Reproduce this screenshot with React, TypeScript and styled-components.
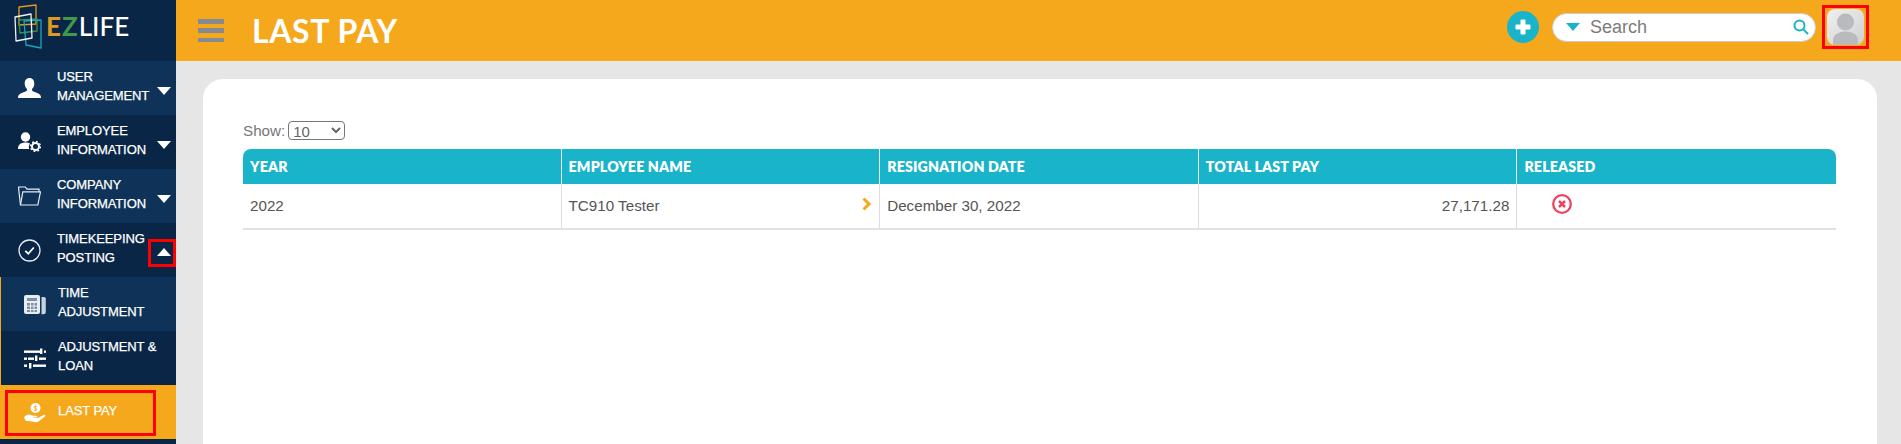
import React from "react";
import styled, { createGlobalStyle } from "styled-components";

const Global = createGlobalStyle`
  html, body { margin: 0; padding: 0; height: 100%; overflow: hidden; background: #e6e6e6; }
  body { font-family: "Liberation Sans", Arial, sans-serif; }
  #root { height: 100%; }
`;

const Shell = styled.div`
  display: grid;
  grid-template-columns: 176px 1fr;
  height: 444px;
  overflow: hidden;
`;

const Sidebar = styled.aside`
  background: #0a2647;
  display: flex;
  flex-direction: column;
`;

const LogoBar = styled.div`
  height: 61px;
  display: flex;
  align-items: flex-start;
  padding: 4px 0 0 14px;
  box-sizing: border-box;
`;

const LogoText = styled.span`
  font-family: "Lato", sans-serif;
  font-size: 26px;
  font-weight: 500;
  letter-spacing: 0;
  line-height: 1;
  color: #fff;
  margin: 9px 0 0 4px;
`;
const LogoLetter = styled.span<{ $c: string }>`
  color: ${(p) => p.$c};
  font-weight: 700;
  margin-right: 1px;
`;

const NavRow = styled.div<{ $alt?: boolean; $sub?: boolean }>`
  position: relative;
  height: 54px;
  box-sizing: border-box;
  display: flex;
  align-items: center;
  background: ${(p) => (p.$alt ? "#0f3358" : "#0a2647")};
  border-left: ${(p) => (p.$sub ? "1px solid #f6a81c" : "0")};
  padding-left: ${(p) => (p.$sub ? "22px" : "18px")};
`;

const NavIcon = styled.span`
  width: 23px;
  height: 24px;
  display: flex;
  align-items: center;
  justify-content: center;
  flex: none;
`;

const NavLabel = styled.span<{ $sub?: boolean }>`
  margin: 0 0 5px ${(p) => (p.$sub ? "12px" : "16px")};
  color: #fff;
  font-size: 13px;
  line-height: 19px;
  letter-spacing: -0.1px;
  text-transform: uppercase;
  width: 110px;
  -webkit-text-stroke: 0.25px #fff;
`;

const Caret = styled.span<{ $up?: boolean }>`
  position: absolute;
  right: 5px;
  top: 26px;
  width: 0;
  height: 0;
  border-left: 7.5px solid transparent;
  border-right: 7.5px solid transparent;
  ${(p) => (p.$up ? "border-bottom: 8px solid #fff; top: 25px;" : "border-top: 8px solid #fff;")}
`;

const RedFrame = styled.span`
  position: absolute;
  left: 148px;
  top: 16px;
  width: 28px;
  height: 28px;
  box-sizing: border-box;
  border: 3px solid #ff0000;
`;

const ActiveRow = styled.div`
  height: 54px;
  background: #f6a81c;
  padding: 5px 20px 3px 5px;
  box-sizing: border-box;
`;

const ActiveFrame = styled.div`
  height: 46px;
  box-sizing: border-box;
  border: 3px solid #ff0000;
  display: flex;
  align-items: center;
  padding-left: 15px;
`;

const Main = styled.main`
  display: flex;
  flex-direction: column;
  min-width: 0;
`;

const TopBar = styled.header`
  height: 61px;
  background: #f6a81c;
  display: flex;
  align-items: center;
  padding-left: 22px;
  box-sizing: border-box;
  flex: none;
`;

const Burger = styled.div`
  width: 26px;
  height: 23px;
  display: flex;
  flex-direction: column;
  justify-content: space-between;
`;
const BurgerBar = styled.span`
  height: 4.5px;
  background: #858a90;
`;

const Title = styled.h1`
  margin: 0 0 0 28px;
  font-family: "Lato", sans-serif;
  font-weight: 700;
  font-size: 32px;
  line-height: 1;
  color: #fff;
  text-transform: uppercase;
  letter-spacing: 0.6px;
`;

const TopRight = styled.div`
  margin-left: auto;
  display: flex;
  align-items: center;
  padding: 0 32px 7px 0;
`;

const PlusButton = styled.div`
  width: 32px;
  height: 32px;
  border-radius: 50%;
  background: #19b4c9;
  display: flex;
  align-items: center;
  justify-content: center;
`;

const SearchBox = styled.div`
  margin-left: 13px;
  width: 264px;
  height: 29px;
  box-sizing: border-box;
  background: #fff;
  border: 1px solid #ccc;
  border-radius: 15px;
  display: flex;
  align-items: center;
  padding: 0 6px 0 13px;
`;

const SearchCaret = styled.span`
  width: 0;
  height: 0;
  border-left: 7.5px solid transparent;
  border-right: 7.5px solid transparent;
  border-top: 8px solid #19b4c9;
  flex: none;
`;

const SearchInput = styled.input`
  border: 0;
  outline: 0;
  background: transparent;
  margin-left: 10px;
  padding: 0;
  flex: 1;
  min-width: 0;
  font-family: "Liberation Sans", Arial, sans-serif;
  font-size: 18px;
  &::placeholder { color: #7b7b7b; opacity: 1; }
`;

const AvatarFrame = styled.div`
  margin-left: 6px;
  width: 47px;
  height: 44px;
  box-sizing: border-box;
  border: 3px solid #ff0000;
  padding: 1px 2px;
`;

const Avatar = styled.div`
  width: 37px;
  height: 36px;
  border-radius: 8px;
  background: linear-gradient(135deg, #f0f0f0, #cfd0d3);
  overflow: hidden;
`;

const Content = styled.div`
  flex: 1;
  padding: 18px 24px 0 27px;
  min-height: 0;
`;

const Card = styled.section`
  background: #fff;
  border-radius: 20px 20px 0 0;
  height: 100%;
  box-sizing: border-box;
  padding: 42px 41px 0 40px;
`;

const ShowRow = styled.div`
  display: flex;
  align-items: center;
  height: 19px;
  margin-bottom: 9px;
  color: #777;
  font-size: 15.2px;
`;

const PageSelect = styled.select`
  margin-left: 3px;
  width: 57px;
  height: 19px;
  font-family: "Liberation Sans", Arial, sans-serif;
  font-size: 15px;
  color: #666;
  background: #fff;
  border: 1px solid #767676;
  border-radius: 4px;
  padding: 0;
`;

const Table = styled.table`
  width: 100%;
  border-collapse: separate;
  border-spacing: 0;
  table-layout: fixed;
`;

const Th = styled.th`
  height: 35px;
  padding: 0 7px;
  box-sizing: border-box;
  background: #19b4c9;
  color: #fff;
  font-family: "Lato", sans-serif;
  font-weight: 800;
  font-size: 14.2px;
  letter-spacing: 0.15px;
  text-align: left;
  text-transform: uppercase;
  border-right: 1px solid #e9f7f9;
  &:first-child { border-top-left-radius: 8px; }
  &:last-child { border-top-right-radius: 8px; border-right: 0; }
`;

const Td = styled.td<{ $right?: boolean }>`
  position: relative;
  height: 46px;
  padding: 0 7px 2px;
  box-sizing: border-box;
  color: #555;
  font-size: 15.2px;
  text-align: ${(p) => (p.$right ? "right" : "left")};
  border-right: 1px solid #ddd;
  border-bottom: 2px solid #e2e2e2;
  &:last-child { border-right: 0; }
`;

const RowChevron = styled.svg`
  position: absolute;
  right: 7px;
  top: 13px;
`;

const StatusIcon = styled.svg`
  display: block;
  margin: -2px 0 0 28px;
`;

const UserIcon = () => (
  <svg width="23" height="20" viewBox="0 0 23 20" fill="#fff">
    <path d="M11.500 0c3 0 4.800 2.400 4.800 5.400 0 2.400-1 4.200-2.200 5.400v1.800c0 1 4.200 1.700 6.700 3.200 1.300.8 2.200 2 2.200 4.200H0c0-2.200.9-3.400 2.200-4.200 2.500-1.500 6.700-2.200 6.700-3.200v-1.800C7.700 9.600 6.700 7.800 6.700 5.400 6.700 2.400 8.500 0 11.500 0z" />
  </svg>
);

const UserGearIcon = () => (
  <svg width="23" height="20" viewBox="0 0 23 20">
    <circle cx="7.500" cy="5" r="4.700" fill="#fff" />
    <path d="M0 17c0-4.500 3-6.500 7.500-6.500 2 0 3.500.4 4.600 1.100-1.300 1.500-1.600 3.400-.9 5.400H0z" fill="#fff" />
    <circle cx="17.500" cy="14.500" r="3.500" fill="none" stroke="#fff" strokeWidth="2" />
    <circle cx="17.500" cy="14.500" r="5" fill="none" stroke="#fff" strokeWidth="1.400" strokeDasharray="1.800 2.100" />
  </svg>
);

const FolderIcon = () => (
  <svg width="23" height="20" viewBox="0 0 23 20" fill="none" stroke="#e8edf2" strokeWidth="1.200">
    <path d="M2.500 19L.7 3.500V1h6.600l1.700 2.200h12v2.500" />
    <path d="M2.500 19h17.300L22.500 5.800H4.800z" />
  </svg>
);

const CheckIcon = () => (
  <svg width="23" height="23" viewBox="0 0 23 23" fill="none" stroke="#e8edf2">
    <circle cx="11.500" cy="11.500" r="10.500" strokeWidth="1.300" />
    <path d="M7.300 11.800l3 3 5.500-6.300" stroke="#fff" strokeWidth="1.800" />
  </svg>
);

const LedgerIcon = () => (
  <svg width="22" height="21" viewBox="0 0 22 21">
    <rect x="0" y="1" width="16" height="19" rx="2" fill="#e8edf2" />
    <path d="M17.500 3h2.500c1 0 1.800.8 1.800 1.800V18c0 1.300-1 2.300-2.300 2.300h-2z" fill="#c8d2dc" />
    <rect x="3" y="4" width="10" height="3" fill="#7d8fa3" />
    <path d="M3 9h3v2.500H3zM7 9h2.500v2.500H7zM10.500 9h2.500v2.500h-2.500zM3 12.500h3V15H3zM7 12.500h2.500V15H7zM10.500 12.500h2.500V15h-2.500zM3 16h3v2H3zM7 16h2.500v2H7zM10.500 16h2.500v2h-2.500z" fill="#7d8fa3" />
  </svg>
);

const SlidersIcon = () => (
  <svg width="22" height="21" viewBox="0 0 22 21" fill="#fff">
    <rect x="0" y="2.500" width="16" height="2.400" />
    <rect x="16" y="0.500" width="2.400" height="5.500" />
    <rect x="20" y="2.500" width="2" height="2.400" />
    <rect x="0" y="9.500" width="3" height="2.400" />
    <rect x="11" y="7.500" width="2.400" height="5.500" />
    <rect x="4" y="9.500" width="6" height="2.400" />
    <rect x="15" y="9.500" width="7" height="2.400" />
    <rect x="0" y="16.500" width="3" height="2.400" />
    <rect x="5" y="15" width="2.400" height="5.500" />
    <rect x="9" y="16.500" width="13" height="2.400" />
  </svg>
);

const HandCoinIcon = () => (
  <svg width="22" height="20" viewBox="0 0 22 20">
    <circle cx="11.500" cy="5" r="5" fill="#fff" />
    <path d="M11.500 2.400v5.200M13 3.800c-.8-.7-3-.6-3 .6s3 .8 3 2.100c0 1.200-2.300 1.200-3.100.5" stroke="#f6a81c" strokeWidth=".8" fill="none" />
    <path d="M0 14.500c1.500-2.500 4-3.500 6-2.800l3.500 1.100h3c1 0 1 1.700 0 1.700H9.500v.5H14l5.500-3c1.500-.7 2.500.7 1.500 1.500L14.500 18.500c-1.200.8-2.800 1-4.200.6L5 18H2z" fill="#fff" />
  </svg>
);

const LogoMark = () => (
  <svg width="28" height="45" viewBox="14 4 28 45" fill="none" strokeWidth="1.300" strokeLinejoin="round" style={{ flex: "none" }}>
    <polygon points="19,7 36,5 36,24 19,25" stroke="#e09a1f" />
    <polygon points="19,20 37,19 37,31 20,33" stroke="#3f8f4c" />
    <polygon points="24,21 41,20 41,48 26,45" stroke="#19a6bd" />
    <polygon points="15,17 31,14 32,38 16,41" stroke="#eef1f4" />
  </svg>
);

export default function App() {
  return (
    <Shell>
      <Global />
      <Sidebar>
        <LogoBar>
          <LogoMark />
          <LogoText>
            <LogoLetter $c="#e09a1f">E</LogoLetter>
            <LogoLetter $c="#3f9a4c">Z</LogoLetter>LIFE
          </LogoText>
        </LogoBar>
        <NavRow $alt>
          <NavIcon><UserIcon /></NavIcon>
          <NavLabel>User Management</NavLabel>
          <Caret />
        </NavRow>
        <NavRow>
          <NavIcon><UserGearIcon /></NavIcon>
          <NavLabel>Employee Information</NavLabel>
          <Caret />
        </NavRow>
        <NavRow $alt>
          <NavIcon><FolderIcon /></NavIcon>
          <NavLabel>Company Information</NavLabel>
          <Caret />
        </NavRow>
        <NavRow>
          <NavIcon><CheckIcon /></NavIcon>
          <NavLabel>Timekeeping Posting</NavLabel>
          <Caret $up />
          <RedFrame />
        </NavRow>
        <NavRow $alt $sub>
          <NavIcon><LedgerIcon /></NavIcon>
          <NavLabel $sub>Time Adjustment</NavLabel>
        </NavRow>
        <NavRow $sub>
          <NavIcon><SlidersIcon /></NavIcon>
          <NavLabel $sub>Adjustment &amp; Loan</NavLabel>
        </NavRow>
        <ActiveRow>
          <ActiveFrame>
            <NavIcon><HandCoinIcon /></NavIcon>
            <NavLabel $sub>Last Pay</NavLabel>
          </ActiveFrame>
        </ActiveRow>
      </Sidebar>
      <Main>
        <TopBar>
          <Burger>
            <BurgerBar />
            <BurgerBar />
            <BurgerBar />
          </Burger>
          <Title>Last Pay</Title>
          <TopRight>
            <PlusButton>
              <svg width="16" height="16" viewBox="0 0 16 16" fill="#fff">
                <path d="M5.500 1.500a1 1 0 0 1 1-1h3a1 1 0 0 1 1 1v4h4a1 1 0 0 1 1 1v3a1 1 0 0 1-1 1h-4v4a1 1 0 0 1-1 1h-3a1 1 0 0 1-1-1v-4h-4a1 1 0 0 1-1-1v-3a1 1 0 0 1 1-1h4z" />
              </svg>
            </PlusButton>
            <SearchBox>
              <SearchCaret />
              <SearchInput placeholder="Search" />
              <svg width="16" height="16" viewBox="0 0 16 16" fill="none" stroke="#19b4c9" strokeWidth="2">
                <circle cx="6.500" cy="6.500" r="5" />
                <path d="M10.500 10.500l4.500 4.500" />
              </svg>
            </SearchBox>
            <AvatarFrame>
              <Avatar>
                <svg width="37" height="36" viewBox="0 0 37 36" fill="#b9babd">
                  <circle cx="18.500" cy="13" r="8.500" />
                  <path d="M6 36v-4c0-6 5-9.500 12.500-9.500S31 26 31 32v4z" />
                </svg>
              </Avatar>
            </AvatarFrame>
          </TopRight>
        </TopBar>
        <Content>
          <Card>
            <ShowRow>
              Show:
              <PageSelect defaultValue="10">
                <option value="10">10</option>
                <option value="25">25</option>
                <option value="50">50</option>
              </PageSelect>
            </ShowRow>
            <Table>
              <thead>
                <tr>
                  <Th>Year</Th>
                  <Th>Employee Name</Th>
                  <Th>Resignation Date</Th>
                  <Th>Total Last Pay</Th>
                  <Th>Released</Th>
                </tr>
              </thead>
              <tbody>
                <tr>
                  <Td>2022</Td>
                  <Td>
                    TC910 Tester
                    <RowChevron width="10" height="14" viewBox="0 0 10 14" fill="none" stroke="#f6a81c" strokeWidth="3">
                      <path d="M1.500 1.500L7 7l-5.500 5.500" />
                    </RowChevron>
                  </Td>
                  <Td>December 30, 2022</Td>
                  <Td $right>27,171.28</Td>
                  <Td>
                    <StatusIcon width="20" height="20" viewBox="0 0 20 20" fill="none" stroke="#e8455f">
                      <circle cx="10" cy="10" r="8.800" strokeWidth="2.300" />
                      <path d="M7 7l6 6M13 7l-6 6" strokeWidth="2.500" />
                    </StatusIcon>
                  </Td>
                </tr>
              </tbody>
            </Table>
          </Card>
        </Content>
      </Main>
    </Shell>
  );
}
